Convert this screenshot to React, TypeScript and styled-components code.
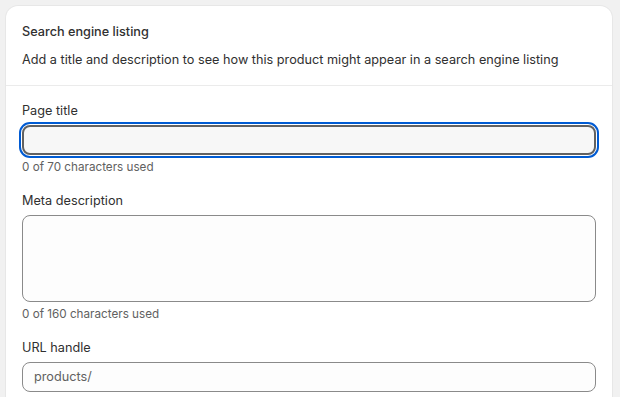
import React from "react";
import styled, { createGlobalStyle } from "styled-components";

const GlobalStyle = createGlobalStyle`
  html, body {
    margin: 0;
    padding: 0;
    background: #f1f1f1;
    font-family: Inter, "Noto Sans", "Liberation Sans", sans-serif;
    color: #303030;
    -webkit-font-smoothing: antialiased;
  }
  * { box-sizing: border-box; }
`;

const Page = styled.div`
  padding: 6px 8px 0 6px;
  height: 397px;
  overflow: hidden;
`;

const Card = styled.section`
  background: #ffffff;
  border-radius: 12px;
  box-shadow: 0 0 0 1px rgba(0, 0, 0, 0.04), 0 1px 0 0 rgba(26, 26, 26, 0.07);
  min-height: 420px;
`;

const Header = styled.header`
  display: flex;
  flex-direction: column;
  gap: 8px;
  padding: 16px 16px 15px;
`;

const Title = styled.h2`
  margin: 0;
  font-size: 12.7px;
  line-height: 20px;
  font-weight: 550;
  color: #303030;
`;

const Description = styled.p`
  margin: 0;
  font-size: 12.7px;
  line-height: 20px;
  font-weight: 400;
  color: #303030;
`;

const Divider = styled.hr`
  margin: 0;
  border: 0;
  border-top: 1px solid #ebebeb;
`;

const Body = styled.div`
  display: flex;
  flex-direction: column;
  gap: 16px;
  padding: 15px 16px 16px;
`;

const Field = styled.div`
  display: flex;
  flex-direction: column;
`;

const Label = styled.label`
  font-size: 12.7px;
  line-height: 20px;
  font-weight: 400;
  color: #303030;
  margin-bottom: 4px;
`;

const Control = styled.div<{ $focused?: boolean; $height: number }>`
  display: flex;
  align-items: ${(p) => (p.$height > 40 ? "flex-start" : "center")};
  height: ${(p) => p.$height}px;
  padding: 0 11px;
  border-radius: 8px;
  background: ${(p) => (p.$focused ? "#f7f7f7" : "#fdfdfd")};
  border: ${(p) => (p.$focused ? "2px solid #616161" : "1px solid #8a8a8a")};
  outline: ${(p) => (p.$focused ? "2px solid #005bd3" : "none")};
  outline-offset: 1px;
`;

const Prefix = styled.span`
  font-size: 12.7px;
  line-height: 20px;
  color: #616161;
  white-space: nowrap;
`;

const TextInput = styled.input`
  flex: 1;
  min-width: 0;
  border: 0;
  outline: none;
  background: transparent;
  font: inherit;
  font-size: 12.7px;
  color: #303030;
  padding: 0;
`;

const TextArea = styled.textarea`
  flex: 1;
  height: 100%;
  border: 0;
  outline: none;
  background: transparent;
  font: inherit;
  font-size: 12.7px;
  color: #303030;
  resize: none;
  padding: 6px 0;
`;

const Help = styled.div`
  margin-top: 4px;
  font-size: 11.7px;
  line-height: 16px;
  color: #616161;
`;

export default function App() {
  return (
    <>
      <GlobalStyle />
      <Page>
        <Card>
          <Header>
            <Title>Search engine listing</Title>
            <Description>
              Add a title and description to see how this product might appear in a search engine listing
            </Description>
          </Header>
          <Divider />
          <Body>
            <Field>
              <Label htmlFor="seo-title">Page title</Label>
              <Control $focused $height={30}>
                <TextInput id="seo-title" defaultValue="" />
              </Control>
              <Help>0 of 70 characters used</Help>
            </Field>
            <Field>
              <Label htmlFor="seo-desc">Meta description</Label>
              <Control $height={87}>
                <TextArea id="seo-desc" defaultValue="" />
              </Control>
              <Help>0 of 160 characters used</Help>
            </Field>
            <Field>
              <Label htmlFor="seo-handle">URL handle</Label>
              <Control $height={30}>
                <Prefix>products/</Prefix>
                <TextInput id="seo-handle" defaultValue="" />
              </Control>
            </Field>
          </Body>
        </Card>
      </Page>
    </>
  );
}
